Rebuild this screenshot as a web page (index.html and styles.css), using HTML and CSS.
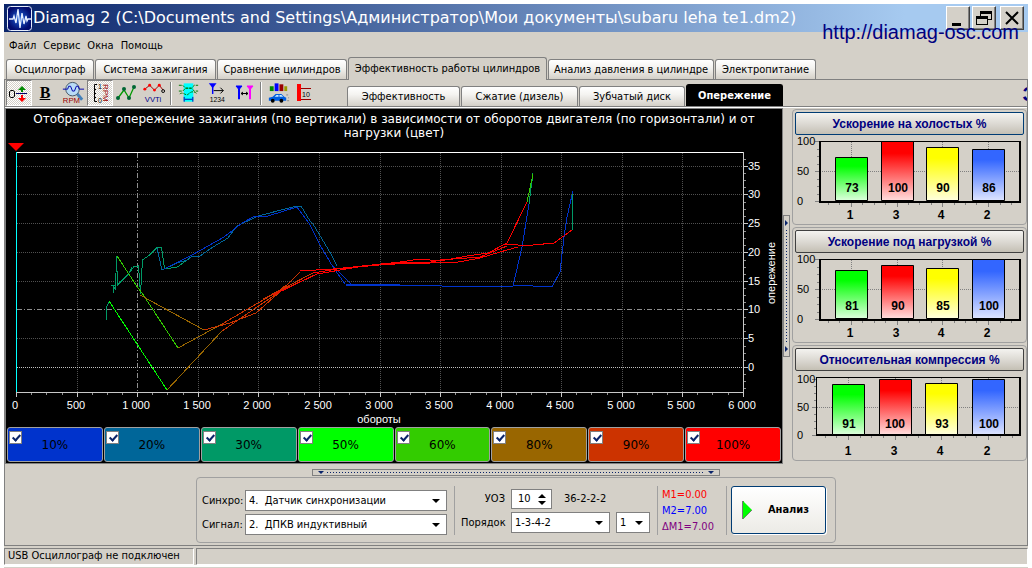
FILE: index.html
```html
<!DOCTYPE html>
<html lang="ru">
<head>
<meta charset="utf-8">
<title>Diamag 2</title>
<link rel="stylesheet" href="styles.css">
</head>
<body>
<div class="window">
  <header class="titlebar">
    <svg class="app-icon" viewBox="0 0 25 25" aria-hidden="true">
      <defs><radialGradient id="app"><stop offset="0" stop-color="#1c62d8"/><stop offset="1" stop-color="#020c6e"/></radialGradient></defs>
      <rect x=".5" y=".5" width="24" height="24" rx="3" fill="url(#app)" stroke="#e4ecfa"/>
      <path d="M2 13h4l1-3 2 7 2-14 2 19 2-15 2 11 2-8 1 5 1-2h3" fill="none" stroke="#e8f0ff" stroke-width="1.3"/>
    </svg>
    <h1 class="title">Diamag 2 (C:\Documents and Settings\Администратор\Мои документы\subaru leha te1.dm2)</h1>
    <div class="window-buttons">
      <button class="window-button" aria-label="Свернуть"><svg viewBox="0 0 20 18"><path d="M4 14h9v3H4z"/></svg></button>
      <button class="window-button" aria-label="Восстановить"><svg viewBox="0 0 20 18"><path d="M6 2h12v9h-4v5H2V7h4zM7 5v2h7v3h3V5zM3 10v5h10v-5z" fill-rule="evenodd"/></svg></button>
      <button class="window-button window-button-close" aria-label="Закрыть"><svg viewBox="0 0 20 18"><path d="M4 3l12 12M16 3L4 15" stroke="#000" stroke-width="2"/></svg></button>
    </div>
    <a class="site-link" href="http://diamag-osc.com">http://diamag-osc.com</a>
  </header>

  <nav class="menu">
    <button>Файл</button><button>Сервис</button><button>Окна</button><button>Помощь</button>
  </nav>

  <div class="tabs">
    <button class="tab">Осциллограф</button>
    <button class="tab">Система зажигания</button>
    <button class="tab">Сравнение цилиндров</button>
    <button class="tab tab-active">Эффективность работы цилиндров</button>
    <button class="tab">Анализ давления в цилиндре</button>
    <button class="tab">Электропитание</button>
  </div>

  <main class="sheet">
    <div class="toolbar">
      <div class="tools">
        <button class="tool tool-pressed" aria-label="Смещение нуля"><svg viewBox="0 0 24 24"><path d="M4 9.500h2l1.500 1v5l-1.500 1H4l-1.500-1v-5z" fill="none" stroke="#000"/><path d="M9 12.500h11" stroke="#006" /><path d="M15 5l4 4h-8zM14 9h2v2h-2z" fill="#080"/><path d="M15 21l4-4h-8zM14 14h2v3h-2z" fill="red"/></svg></button>
        <button class="tool tool-bold" aria-label="Жирные линии">B</button>
        <button class="tool tool-wide" aria-label="Лупа RPM"><svg viewBox="0 0 28 24"><circle cx="14" cy="8" r="7" fill="#b9dcf6" stroke="#456"/><path d="M4 8h5l1-3h2l2 5h2l2-5h2l1 3h5" fill="none" stroke="#00a"/><path d="M19 13l5 6" stroke="#4480b8" stroke-width="3"/><text x="4" y="22" class="tiny-label dark-red">RPM</text></svg></button>
        <button class="tool tool-pressed" aria-label="Шкала RPM"><svg viewBox="0 0 24 24"><path d="M9 3.500H6.500v17H9M6.500 8.500H8M6.500 12.500H8M6.500 16.500H8" fill="none" stroke="#000"/><text x="10" y="8" class="tiny-scale">1</text><text x="10" y="22" class="tiny-scale">0</text><text transform="translate(15 3) rotate(90)" class="tiny-label dark-red">RPM</text></svg></button>
        <button class="tool" aria-label="Точки графика"><svg viewBox="0 0 24 24"><path d="M4 17l6-8 5 8 5-11" fill="none" stroke="#090" stroke-width="1.300"/><g fill="#063"><circle cx="4" cy="17" r="2"/><circle cx="10" cy="8" r="2"/><circle cx="15" cy="17" r="2"/><circle cx="20" cy="6" r="2"/></g></svg></button>
        <button class="tool tool-wide" aria-label="VVTi"><svg viewBox="0 0 28 24"><path d="M5 8l5-4 5 5 5-5 4 5" fill="none" stroke="#900"/><g fill="red"><circle cx="5" cy="8" r="1.500"/><circle cx="10" cy="4" r="1.500"/><circle cx="15" cy="9" r="1.500"/><circle cx="20" cy="4" r="1.500"/></g><circle cx="24" cy="10" r="1.500" fill="none" stroke="#000"/><text x="5" y="21" class="tiny-label navy">VVTi</text></svg></button>
        <span class="tool-separator"></span>
        <button class="tool tool-wide" aria-label="Границы сигнала"><svg viewBox="0 0 28 24"><path d="M9 2h10v19H9z" fill="#0ff"/><path d="M4 4h4l3 3h6l3-3h4M4 10h4l3-3h6l3 3h4M5 13c4-3 6 3 9 0s6-3 9 0" fill="none" stroke="#070" stroke-dasharray="3 1"/><path d="M9.500 16v5M18.500 16v5M10 18.500h8" stroke="#00a" /></svg></button>
        <button class="tool tool-wide" aria-label="Метка 1234"><svg viewBox="0 0 28 24"><path d="M5 2h8l-4 5z" fill="#00f"/><path d="M9 5v8" fill="none" stroke="#00f" stroke-width="1.500"/><path d="M10 9.500h10M17 6.500l3 3-3 3" fill="none" stroke="#000"/><text x="6" y="21" class="tiny-digits">1234</text></svg></button>
        <button class="tool" aria-label="Две метки"><svg viewBox="0 0 24 24"><path d="M3 5h6L6.500 8v10h-1V8z" fill="#00f" stroke="#00f"/><path d="M14 5h6l-2.500 3v10h-1V8z" fill="#f0f" stroke="#f0f"/><path d="M8 12.500h7M10 11l-2 1.500 2 1.500M13 11l2 1.500-2 1.500" fill="none" stroke="#000"/></svg></button>
        <span class="tool-separator"></span>
        <button class="tool tool-wide" aria-label="Мощность автомобиля"><svg viewBox="0 0 28 24"><path d="M5 5h4v5H5z" fill="#080"/><path d="M10 2h4v8h-4z" fill="#00f"/><path d="M15 3h4v7h-4z" fill="#900"/><path d="M20 5h3v5h-3z" fill="#990"/><path d="M4 17l4-1 3-3h6l3 3 2 1v3H4z" fill="#005ee0"/><path d="M12 14h2v2h-4zM15 14h2l2 2h-4z" fill="#cef"/><circle cx="8" cy="20" r="2"/><circle cx="17" cy="20" r="2"/><path d="M22 14h2M24 17h1M23 20h2" stroke="#888"/></svg></button>
        <button class="tool" aria-label="Десять"><svg viewBox="0 0 24 24"><path d="M3 3h4v17H3z" fill="red"/><path d="M7 7.500h10M7 18.500h10" stroke="#900"/><text x="8" y="16" class="tiny-digits">10</text></svg></button>
      </div>
      <div class="subtabs">
        <button class="tab">Эффективность</button>
        <button class="tab">Сжатие (дизель)</button>
        <button class="tab">Зубчатый диск</button>
        <button class="tab subtab-active">Опережение</button>
      </div>
      <span class="ticker">З</span>
    </div>

    <div class="workspace">
      <section class="chart">
        <p class="chart-caption">Отображает опережение зажигания (по вертикали) в зависимости от оборотов двигателя (по горизонтали) и от нагрузки (цвет)</p>
        <svg class="plot" viewBox="6 140 776 286" role="img" aria-label="График опережения">
          <path d="M8 143h16l-8 8z" fill="red"/>
          <g class="grid">
            <path d="M77.500 153V392M198.500 153V392M258.500 153V392M319.500 153V392M380.500 153V392M440.500 153V392M501.500 153V392M561.500 153V392M622.500 153V392M682.500 153V392"/>
            <path d="M17 166.500H743M17 194.500H743M17 223.500H743M17 252.500H743M17 281.500H743M17 338.500H743"/>
          </g>
          <path class="grid-zero" d="M17 367.500H743"/>
          <path class="grid-major" d="M137.500 153V392M17 309.500H743"/>
          <path d="M16 152.500H743" stroke="#fff"/>
          <path d="M16.500 152V392" stroke="#0ff"/>
          <path class="axis" d="M16 392.500H744M743.500 152V393M16.500 392v5M77.500 392v5M137.500 392v5M198.500 392v5M258.500 392v5M319.500 392v5M380.500 392v5M440.500 392v5M501.500 392v5M561.500 392v5M622.500 392v5M682.500 392v5M743.500 392v5M743 166.500h5M743 194.500h5M743 223.500h5M743 252.500h5M743 281.500h5M743 309.500h5M743 338.500h5M743 367.500h5"/>
          <path class="axis-minor" d="M31.500 393v2M46.500 393v2M62.500 393v2M92.500 393v2M107.500 393v2M122.500 393v2M152.500 393v2M167.500 393v2M183.500 393v2M213.500 393v2M228.500 393v2M243.500 393v2M273.500 393v2M288.500 393v2M304.500 393v2M334.500 393v2M349.500 393v2M365.500 393v2M395.500 393v2M410.500 393v2M425.500 393v2M455.500 393v2M470.500 393v2M486.500 393v2M516.500 393v2M531.500 393v2M546.500 393v2M576.500 393v2M591.500 393v2M607.500 393v2M637.500 393v2M652.500 393v2M667.500 393v2M697.500 393v2M712.500 393v2M728.500 393v2M744 159.500h2M744 173.500h2M744 180.500h2M744 187.500h2M744 202.500h2M744 209.500h2M744 216.500h2M744 231.500h2M744 238.500h2M744 245.500h2M744 260.500h2M744 267.500h2M744 274.500h2M744 288.500h2M744 295.500h2M744 302.500h2M744 317.500h2M744 324.500h2M744 331.500h2M744 346.500h2M744 353.500h2M744 360.500h2M744 374.500h2M744 381.500h2M744 388.500h2"/>
          <g class="series">
            <path stroke="#009966" d="M106.500 320v-13l3-6M106.500 307v6M111 285.500h4M113.500 293v-7l2 4 1-34 1 29 11-11 5-7 5-1 2 28 2-34 7-5 8-8h4l3 22 13-2 15-11M117 285l12-12 3-6"/>
            <path stroke="#006699" d="M157 248l5 22 15-7 10-3 5-4h8l13-9 15-9 9-12 21-10 39-10h4l9 15 3 3 9 15 9 15 6 12"/>
            <path stroke="#0033cc" d="M164 269l28-14 32-18 18-14 13-7h13l29-9 12 16 11 22 13 22 12 17 55 1h113l39 2 8-15 4-35 3-20 6-26M333 266l18 18M346 285h80l16 1h71l9-39 7-43"/>
            <path stroke="#009966" d="M529 204l4-31M572.500 194v36"/>
            <path stroke="#33cc00" d="M117 256l21 32 4 5 36 55M527 202l6-28"/>
            <path stroke="#00ff00" d="M109 301l58 89"/>
            <path stroke="#996600" d="M167 390l55-59M178 348l44-24M140 295l64 35"/>
            <path stroke="#cc3300" d="M222 331l60-41M222 324l60-35M204 330l26-7 26-10 26-23 18-18M263 299l25-13 25-13M282 290l35-16M270 299l16-14"/>
            <path stroke="#ff0000" d="M300 271l33-2 20-2 47-5 20-3 20 2 27-5 21-3 17-9h13M313 273l24-4 63-7M273 295l44-21 41-7 42-4h27l13-3 40-3 27-11M336 269l40-4 57-3 20 1 27-5 20-6 18-5M400 262l30 2M488 253l19-10 20-41M518 245h15l21-2 18-13"/>
          </g>
          <g class="axis-label">
            <text x="15" y="409">0</text><text x="76" y="409">500</text><text x="136" y="409">1 000</text><text x="197" y="409">1 500</text><text x="257" y="409">2 000</text><text x="318" y="409">2 500</text><text x="379" y="409">3 000</text><text x="439" y="409">3 500</text><text x="500" y="409">4 000</text><text x="560" y="409">4 500</text><text x="621" y="409">5 000</text><text x="681" y="409">5 500</text><text x="742" y="409">6 000</text>
          </g>
          <g class="axis-value">
            <text x="748" y="170">35</text><text x="748" y="198">30</text><text x="748" y="227">25</text><text x="748" y="256">20</text><text x="748" y="285">15</text><text x="748" y="313">10</text><text x="748" y="342">5</text><text x="748" y="371">0</text>
          </g>
          <text class="axis-title" x="379" y="423">обороты</text>
          <text class="axis-title" transform="translate(775 273) rotate(-90)">опережение</text>
        </svg>
        <div class="legend">
          <label class="load load-10"><input type="checkbox" checked>10%</label>
          <label class="load load-20"><input type="checkbox" checked>20%</label>
          <label class="load load-30"><input type="checkbox" checked>30%</label>
          <label class="load load-50"><input type="checkbox" checked>50%</label>
          <label class="load load-60"><input type="checkbox" checked>60%</label>
          <label class="load load-80"><input type="checkbox" checked>80%</label>
          <label class="load load-90"><input type="checkbox" checked>90%</label>
          <label class="load load-100"><input type="checkbox" checked>100%</label>
        </div>
      </section>

      <div class="splitter splitter-vertical"><i></i><span></span><i></i></div>

      <aside class="side">
        <section class="gauge">
          <button class="gauge-title gauge-title-focus">Ускорение на холостых %</button>
          <svg viewBox="795 135 229 87" role="img" aria-label="Ускорение на холостых">
            <defs>
              <linearGradient id="green" x2="0" y2="1"><stop offset=".2" stop-color="#0f0"/><stop offset="1" stop-color="#dfd"/></linearGradient>
              <linearGradient id="red" x2="0" y2="1"><stop offset=".2" stop-color="#f00"/><stop offset="1" stop-color="#fdd"/></linearGradient>
              <linearGradient id="yellow" x2="0" y2="1"><stop offset=".2" stop-color="#ff0"/><stop offset="1" stop-color="#ffd"/></linearGradient>
              <linearGradient id="blue" x2="0" y2="1"><stop offset=".2" stop-color="#36f"/><stop offset="1" stop-color="#dde4ff"/></linearGradient>
            </defs>
            <path class="gauge-grid" d="M820 171.500h200M851.500 142v60M897.500 142v60M942.500 142v60M988.500 142v60"/>
            <path class="gauge-ticks" d="M815 141.500h4M815 171.500h4M815 201.500h4M817 149.500h2M817 156.500h2M817 164.500h2M817 179.500h2M817 186.500h2M817 194.500h2M851.500 203v4M897.500 203v4M942.500 203v4M988.500 203v4M828.500 203v2M839.500 203v2M862.500 203v2M874.500 203v2M885.500 203v2M908.500 203v2M919.500 203v2M931.500 203v2M954.500 203v2M965.500 203v2M976.500 203v2M1000.500 203v2M1011.500 203v2"/>
            <path d="M819 141.500h202" stroke="#000"/><path d="M820 141v61h200v-61" class="gauge-frame"/>
            <g stroke="#000"><path d="M835.500 157.500h32v43h-32z" fill="url(#green)"/><path d="M881.500 141.500h32v59h-32z" fill="url(#red)"/><path d="M926.500 147.500h32v53h-32z" fill="url(#yellow)"/><path d="M972.500 149.500h32v51h-32z" fill="url(#blue)"/></g>
            <g class="gauge-value"><text x="852" y="192">73</text><text x="898" y="192">100</text><text x="943" y="192">90</text><text x="989" y="192">86</text><text x="850" y="219">1</text><text x="896" y="219">3</text><text x="941" y="219">4</text><text x="987" y="219">2</text></g>
            <g class="gauge-scale"><text x="797" y="145">100</text><text x="797" y="175">50</text><text x="797" y="205">0</text></g>
          </svg>
        </section>
        <section class="gauge">
          <button class="gauge-title">Ускорение под нагрузкой %</button>
          <svg viewBox="795 253 229 87" role="img" aria-label="Ускорение под нагрузкой">
            <path class="gauge-grid" d="M820 289.500h200M851.500 260v60M897.500 260v60M942.500 260v60M988.500 260v60"/>
            <path class="gauge-ticks" d="M815 259.500h4M815 289.500h4M815 319.500h4M817 267.500h2M817 274.500h2M817 282.500h2M817 297.500h2M817 304.500h2M817 312.500h2M851.500 321v4M897.500 321v4M942.500 321v4M988.500 321v4M828.500 321v2M839.500 321v2M862.500 321v2M874.500 321v2M885.500 321v2M908.500 321v2M919.500 321v2M931.500 321v2M954.500 321v2M965.500 321v2M976.500 321v2M1000.500 321v2M1011.500 321v2"/>
            <path d="M819 259.500h202" stroke="#000"/><path d="M820 259v61h200v-61" class="gauge-frame"/>
            <g stroke="#000"><path d="M835.500 270.500h32v48h-32z" fill="url(#green)"/><path d="M881.500 265.500h32v53h-32z" fill="url(#red)"/><path d="M926.500 268.500h32v50h-32z" fill="url(#yellow)"/><path d="M972.500 259.500h32v59h-32z" fill="url(#blue)"/></g>
            <g class="gauge-value"><text x="852" y="310">81</text><text x="898" y="310">90</text><text x="943" y="310">85</text><text x="989" y="310">100</text><text x="850" y="337">1</text><text x="896" y="337">3</text><text x="941" y="337">4</text><text x="987" y="337">2</text></g>
            <g class="gauge-scale"><text x="797" y="263">100</text><text x="797" y="293">50</text><text x="797" y="323">0</text></g>
          </svg>
        </section>
        <section class="gauge">
          <button class="gauge-title">Относительная компрессия %</button>
          <svg viewBox="795 371 229 87" role="img" aria-label="Относительная компрессия">
            <path class="gauge-grid" d="M817 407.500h203M848.500 378v57M895.500 378v57M941.500 378v57M988.500 378v57"/>
            <path class="gauge-ticks" d="M812 379.500h4M812 407.500h4M812 435.500h4M814 386.500h2M814 393.500h2M814 400.500h2M814 414.500h2M814 421.500h2M814 428.500h2M848.500 436v4M895.500 436v4M941.500 436v4M988.500 436v4M825.500 436v2M836.500 436v2M860.500 436v2M871.500 436v2M883.500 436v2M906.500 436v2M918.500 436v2M930.500 436v2M953.500 436v2M965.500 436v2M976.500 436v2M1000.500 436v2M1012.500 436v2"/>
            <path d="M816 377.500h205M816.500 377v58" stroke="#000"/><path d="M816 435h204v-58" class="gauge-frame"/>
            <g stroke="#000"><path d="M832.500 384.500h32v50h-32z" fill="url(#green)"/><path d="M879.500 379.500h32v55h-32z" fill="url(#red)"/><path d="M925.500 383.500h32v51h-32z" fill="url(#yellow)"/><path d="M972.500 379.500h32v55h-32z" fill="url(#blue)"/></g>
            <g class="gauge-value"><text x="849" y="428">91</text><text x="895" y="428">100</text><text x="942" y="428">93</text><text x="989" y="428">100</text><text x="848" y="455">1</text><text x="894" y="455">3</text><text x="940" y="455">4</text><text x="987" y="455">2</text></g>
            <g class="gauge-scale"><text x="797" y="383">100</text><text x="797" y="411">50</text><text x="797" y="439">0</text></g>
          </svg>
        </section>
      </aside>
    </div>

    <div class="splitter splitter-horizontal"><i></i><span></span><i></i></div>

    <form class="controls">
      <div class="source-fields">
        <label for="sync">Синхро:</label>
        <span class="select"><select id="sync"><option>4.&nbsp; Датчик синхронизации</option></select></span>
        <label for="signal">Сигнал:</label>
        <span class="select"><select id="signal"><option>2.&nbsp; ДПКВ индуктивный</option></select></span>
      </div>
      <div class="order-fields">
        <div class="field-row">
          <label for="angle">УОЗ</label>
          <span class="spin"><input id="angle" type="text" value="10"><span class="spin-arrows"><i class="arrow-up"></i><i class="arrow-down"></i></span></span>
          <span class="disc">36-2-2-2</span>
        </div>
        <div class="field-row">
          <label for="order">Порядок</label>
          <span class="select select-order"><select id="order"><option>1-3-4-2</option></select></span>
          <span class="select select-first"><select aria-label="Первый цилиндр"><option>1</option></select></span>
        </div>
      </div>
      <div class="markers">
        <output class="marker-one">М1=0.00</output>
        <output class="marker-two">М2=7.00</output>
        <output class="marker-delta">ΔМ1=7.00</output>
      </div>
      <div class="action">
        <button type="button" class="analyze"><svg viewBox="0 0 12 20" aria-hidden="true"><path d="M1 19V1" stroke="#777" stroke-width="2"/><path d="M1 1l9 9-9 9z" fill="#0f0"/><path d="M1 19l9-9" stroke="#686"/></svg><span>Анализ</span></button>
      </div>
    </form>
  </main>

  <footer class="status">
    <span>USB Осциллограф не подключен</span><span></span>
  </footer>
</div>
</body>
</html>
```

FILE: styles.css
```css
* { box-sizing: border-box; }

body {
  margin: 0;
  padding: 4px 4px 0;
  background: #fff;
  color: #000;
  font: 11px/14px "DejaVu Sans Condensed", "DejaVu Sans", sans-serif;
}

button, input, select { font: inherit; color: inherit; margin: 0; }
svg { display: block; }

.window {
  min-height: calc(100vh - 4px);
  background: #d4d0c8;
  display: flex;
  flex-direction: column;
}

/* Title bar */
.titlebar {
  position: relative;
  height: 28px;
  padding: 0 4px 0 3px;
  display: flex;
  align-items: center;
  background: linear-gradient(90deg, #0a246a, #a6caf0 88%);
}
.app-icon { width: 25px; height: 25px; flex: none; }
.title {
  margin: 0 0 0 1px;
  flex: 1;
  min-width: 0;
  overflow: hidden;
  white-space: nowrap;
  color: #fff;
  font: 16px/26px "DejaVu Sans", sans-serif;
}
.window-buttons { display: flex; gap: 2px; }
.window-button {
  width: 24px;
  height: 24px;
  padding: 1px;
  background: #d4d0c8;
  border: 1px solid;
  border-color: #fff #404040 #404040 #fff;
  box-shadow: inset -1px -1px #808080;
}
.window-button-close { margin-left: 2px; }
.site-link {
  position: absolute;
  right: 9px;
  top: 17px;
  color: #000080;
  font: 20px/22px "Liberation Sans", sans-serif;
  text-decoration: none;
}

/* Menu */
.menu { display: flex; gap: 7px; padding: 7px 5px 4px; }
.menu button { border: 0; padding: 0; background: none; }

/* Tabs */
.tabs {
  display: grid;
  grid-template-columns: 88px 121px 130px 199px 166px 101px;
  gap: 1px;
  align-items: end;
  height: 22px;
  padding-left: 2px;
}
.tab {
  height: 20px;
  padding: 0;
  border: 1px solid #808080;
  border-bottom: 0;
  border-radius: 3px 3px 0 0;
  background: linear-gradient(#fff, #f4f3f0 40%, #d4d0c8);
  white-space: nowrap;
}
.tab-active { height: 23px; margin-bottom: -1px; background: #d4d0c8; z-index: 1; }

.sheet { border: 1px solid #808080; padding-bottom: 2px; }

.toolbar {
  position: relative;
  display: flex;
  align-items: flex-end;
  height: 28px;
  border-bottom: 1px solid #fff;
  box-shadow: inset 0 -1px #808080;
  padding-bottom: 1px;
  overflow: hidden;
}
.tools { display: flex; align-items: center; width: 342px; height: 26px; padding-left: 1px; }
.tool { width: 26px; height: 26px; padding: 1px; border: 0; background: none; display: grid; place-items: center; }
.tool svg { width: 100%; height: 24px; }
.tool-wide { width: 29px; }
.tool-pressed {
  border: 1px solid;
  border-color: #808080 #fff #fff #808080;
  padding: 0;
  background: repeating-conic-gradient(#fff 0 25%, #d4d0c8 0 50%) 0 0 / 2px 2px;
}
.tool-bold { font: bold 16px/18px "Liberation Serif", serif; text-decoration: underline; }
.tool-separator { width: 2px; height: 23px; margin: 0 2px; border-left: 1px solid #808080; border-right: 1px solid #fff; }
.tiny-label { font: 8px "Liberation Sans", sans-serif; }
.tiny-digits { font: 7px "Liberation Sans", sans-serif; }
.tiny-scale { font: 7px "Liberation Sans", sans-serif; }
.dark-red { fill: #900; }
.navy { fill: #008; }

.subtabs {
  display: grid;
  grid-template-columns: 113px 117px 106px 97px;
  gap: 1px;
  align-items: end;
}
.subtab-active { height: 22px; background: #000; color: #fff; border-color: #000; font-weight: bold; }
.ticker {
  position: absolute;
  right: -8px;
  top: 4px;
  color: #000080;
  font: bold 20px/20px "Liberation Sans", sans-serif;
}

/* Workspace */
.workspace { display: grid; grid-template-columns: minmax(0, 1fr) 7px 237px; align-items: start; }
.chart { background: #000; border: 1px solid #808080; }
.chart-caption {
  margin: 0;
  padding: 3px 12px 0;
  color: #fff;
  text-align: center;
  font: 12px/14px "DejaVu Sans", sans-serif;
}
.plot { width: 100%; height: auto; fill: none; }
.plot text { fill: #fff; font-family: "Liberation Sans", sans-serif; font-size: 11px; }
.grid { stroke: #505050; stroke-dasharray: 1 1; }
.grid-zero { stroke: #c0c0c0; stroke-dasharray: 1 1; }
.grid-major { stroke: #909090; stroke-dasharray: 5 2 1 2; }
.axis { stroke: #c8c8c8; }
.axis-minor { stroke: #909090; }
.series { shape-rendering: crispEdges; }
.axis-label, .axis-title { text-anchor: middle; }

.legend { display: grid; grid-template-columns: repeat(8, 1fr); gap: 1px; padding: 1px; }
.load {
  position: relative;
  height: 35px;
  border: 1px solid #a0a0a0;
  border-radius: 3px;
  display: grid;
  place-items: center;
  color: #000;
  font: 12px/16px "DejaVu Sans", sans-serif;
}
.load input {
  appearance: none;
  position: absolute;
  left: 1px;
  top: 3px;
  width: 13px;
  height: 13px;
  background: #fff;
  border: 1px solid #808080;
}
.load input::after {
  content: "";
  position: absolute;
  left: 4px;
  top: 1px;
  width: 3px;
  height: 6px;
  border: solid #0a246a;
  border-width: 0 2px 2px 0;
  transform: rotate(42deg);
}
.load-10 { background: #0033cc; }
.load-20 { background: #006699; }
.load-30 { background: #009966; }
.load-50 { background: #00ff00; }
.load-60 { background: #33cc00; }
.load-80 { background: #996600; }
.load-90 { background: #cc3300; }
.load-100 { background: #ff0000; }

/* Splitters */
.splitter { display: flex; align-items: center; justify-content: space-between; border: 1px solid #808080; }
.splitter i { width: 0; height: 0; border: 0 solid transparent; }
.splitter-vertical { flex-direction: column; height: 142px; padding: 4px 0; align-self: center; }
.splitter-vertical i { border-width: 3px 0 3px 3px; border-left-color: #0a246a; }
.splitter-vertical span { width: 1px; height: 112px; background: repeating-linear-gradient(#0a246a 0 1px, transparent 1px 3px); }
.splitter-horizontal { width: 408px; height: 7px; margin: 5px auto 1px; padding: 0 5px; }
.splitter-horizontal i { border-width: 3px 3px 0; border-top-color: #0a246a; }
.splitter-horizontal span { height: 1px; width: 378px; background: repeating-linear-gradient(90deg, #0a246a 0 1px, transparent 1px 3px); }

/* Side gauges */
.side { display: grid; gap: 2px; padding: 1px 0 0 2px; }
.gauge { border: 1px solid #a0a0a0; border-radius: 4px; padding: 2px; }
.gauge-title {
  display: block;
  width: 100%;
  height: 23px;
  padding: 0;
  border: 1px solid #404040;
  border-radius: 2px;
  background: linear-gradient(#f4f3f0, #d8d5ce 60%, #c4c0b4);
  color: #000080;
  font: bold 12px/16px "Liberation Sans", sans-serif;
}
.gauge-title-focus { border-color: #003c74; }
.gauge svg { width: 100%; height: auto; }
.gauge-grid { stroke: #808080; stroke-dasharray: 1 1; }
.gauge-ticks { stroke: #808080; }
.gauge-frame { fill: none; stroke: #000; stroke-width: 2; }
.gauge-value { text-anchor: middle; font: bold 12px "Liberation Sans", sans-serif; }
.gauge-scale { font: 11px "Liberation Sans", sans-serif; }

/* Bottom controls */
.controls {
  display: flex;
  width: 640px;
  height: 66px;
  margin: 0 auto;
  padding: 8px 9px 7px 5px;
  border: 1px solid #a0a0a0;
  border-radius: 4px;
}
.source-fields {
  display: grid;
  grid-template-columns: 39px 202px;
  grid-template-rows: 21px 21px;
  gap: 3px 4px;
  padding: 4px 7px 0 0;
  align-items: center;
}
.select { position: relative; display: block; height: 21px; background: #fff; border: 1px solid #808080; }
.select select { appearance: none; width: 100%; height: 100%; padding: 0 3px; border: 0; background: none; }
.select::after {
  content: "";
  position: absolute;
  right: 6px;
  top: 8px;
  border: solid transparent;
  border-width: 4px 4px 0;
  border-top-color: #000;
  pointer-events: none;
}
.order-fields { border-left: 1px solid #a0a0a0; display: grid; gap: 3px; padding: 3px 7px 2px 6px; }
.field-row { display: flex; align-items: center; }
.field-row label { width: 44px; margin-right: 6px; text-align: right; }
.spin { display: flex; align-items: center; width: 41px; height: 20px; background: #fff; border: 1px solid #808080; }
.spin input { width: 26px; border: 0; padding: 0 0 0 6px; background: none; }
.spin-arrows { display: grid; gap: 3px; }
.arrow-up, .arrow-down { border: solid transparent; border-width: 0 4px 4px; border-bottom-color: #000; }
.arrow-down { border-width: 4px 4px 0; border-top-color: #000; }
.disc { margin-left: 12px; }
.select-order { width: 99px; }
.select-first { width: 34px; margin-left: 6px; }
.markers {
  display: grid;
  align-content: center;
  width: 69px;
  padding-left: 4px;
  border-left: 1px solid #a0a0a0;
  line-height: 16px;
  white-space: nowrap;
}
.marker-one { color: #f00; }
.marker-two { color: #00f; }
.marker-delta { color: #800080; }
.action { flex: 1; border-left: 1px solid #a0a0a0; padding-left: 4px; }
.analyze {
  display: flex;
  align-items: center;
  width: 100%;
  height: 48px;
  padding: 0 10px;
  border: 1px solid #003c74;
  border-radius: 3px;
  background: linear-gradient(#fff, #ecebe6);
  box-shadow: 1px 1px #fff;
  font-weight: bold;
}
.analyze svg { width: 12px; height: 20px; }
.analyze span { flex: 1; text-align: center; padding-left: 8px; }

/* Status bar */
.status {
  display: grid;
  grid-template-columns: 190px 1fr;
  gap: 2px;
  margin-top: 2px;
  box-shadow: 0 2px #fff;
}
.status span {
  height: 17px;
  padding: 0 3px;
  border: 1px solid;
  border-color: #808080 #fff #fff #808080;
}
```
